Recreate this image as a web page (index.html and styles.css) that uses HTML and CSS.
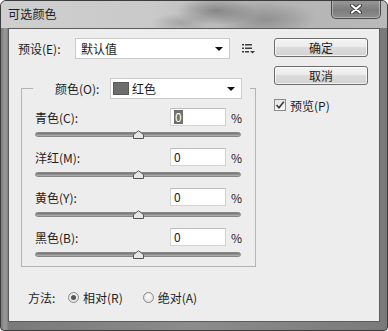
FILE: index.html
```html
<!DOCTYPE html>
<html lang="zh">
<head>
<meta charset="utf-8">
<title>可选颜色</title>
<link rel="stylesheet" href="styles.css">
</head>
<body>
<div class="window">
  <div class="titlebar">
    <span class="title">可选颜色</span>
    <div class="close">
      <svg width="14" height="10" viewBox="0 0 14 10"><path d="M3 1.5 L11 8.5 M11 1.5 L3 8.5" stroke="#3a3a3a" stroke-width="4" stroke-linecap="round"/><path d="M3 1.5 L11 8.5 M11 1.5 L3 8.5" stroke="#ffffff" stroke-width="2.2" stroke-linecap="round"/></svg>
    </div>
  </div>
  <div class="client">
    <div class="main">
      <div class="preset-row">
        <span class="preset-label">预设(E):</span>
        <div class="select preset-select"><span>默认值</span><i class="arrow"></i></div>
        <svg class="list-icon" width="13" height="11" viewBox="0 0 13 11">
          <rect x="0" y="1" width="2" height="1.5" fill="#3c3c3c"/><rect x="3" y="1" width="7" height="1.5" fill="#3c3c3c"/>
          <rect x="0" y="4.5" width="2" height="1.5" fill="#3c3c3c"/><rect x="3" y="4.5" width="7" height="1.5" fill="#3c3c3c"/>
          <rect x="0" y="8" width="2" height="1.5" fill="#3c3c3c"/><rect x="3" y="8" width="4" height="1.5" fill="#3c3c3c"/>
          <path d="M8 8 L13 8 L10.5 10.5 Z" fill="#3c3c3c"/>
        </svg>
      </div>
      <fieldset class="group">
        <legend class="legend">
          <span class="color-label">颜色(O):</span>
          <div class="select color-select"><span class="swatch"></span><span>红色</span><i class="arrow"></i></div>
        </legend>
        <div class="row">
          <div class="row-top"><span class="row-label">青色(C):</span><div class="input"><span class="sel">0</span></div><span class="pct">%</span></div>
          <div class="slider"><div class="track"></div><svg class="thumb" width="11" height="9" viewBox="0 0 11 9"><path d="M0.5 8.5 L0.5 4.5 L5.5 0.8 L10.5 4.5 L10.5 8.5 Z" fill="#e6e6e6" stroke="#555"/></svg></div>
        </div>
        <div class="row">
          <div class="row-top"><span class="row-label">洋红(M):</span><div class="input"><span>0</span></div><span class="pct">%</span></div>
          <div class="slider"><div class="track"></div><svg class="thumb" width="11" height="9" viewBox="0 0 11 9"><path d="M0.5 8.5 L0.5 4.5 L5.5 0.8 L10.5 4.5 L10.5 8.5 Z" fill="#e6e6e6" stroke="#555"/></svg></div>
        </div>
        <div class="row">
          <div class="row-top"><span class="row-label">黄色(Y):</span><div class="input"><span>0</span></div><span class="pct">%</span></div>
          <div class="slider"><div class="track"></div><svg class="thumb" width="11" height="9" viewBox="0 0 11 9"><path d="M0.5 8.5 L0.5 4.5 L5.5 0.8 L10.5 4.5 L10.5 8.5 Z" fill="#e6e6e6" stroke="#555"/></svg></div>
        </div>
        <div class="row">
          <div class="row-top"><span class="row-label">黑色(B):</span><div class="input"><span>0</span></div><span class="pct">%</span></div>
          <div class="slider"><div class="track"></div><svg class="thumb" width="11" height="9" viewBox="0 0 11 9"><path d="M0.5 8.5 L0.5 4.5 L5.5 0.8 L10.5 4.5 L10.5 8.5 Z" fill="#e6e6e6" stroke="#555"/></svg></div>
        </div>
      </fieldset>
      <div class="method-row">
        <span class="method-label">方法:</span>
        <span class="radio checked"></span><span class="radio-text">相对(R)</span>
        <span class="radio"></span><span class="radio-text">绝对(A)</span>
      </div>
    </div>
    <div class="side">
      <div class="button">确定</div>
      <div class="button">取消</div>
      <div class="check-row">
        <span class="checkbox"><svg width="10" height="10" viewBox="0 0 10 10"><path d="M1.5 5 L4 7.8 L8.8 1.8" fill="none" stroke="#3a3a3a" stroke-width="1.6"/></svg></span>
        <span>预览(P)</span>
      </div>
    </div>
  </div>
</div>
</body>
</html>
```
FILE: styles.css
```css
* { box-sizing: border-box; }
html, body { margin: 0; padding: 0; background: #ffffff; }
body {
  font-family: "Noto Sans CJK SC", "Noto Sans", sans-serif;
  font-size: 12px;
  color: #1c1c1c;
}
.window {
  width: 388px;
  height: 331px;
  display: flex;
  flex-direction: column;
  border: 1px solid #3c3c3c;
  border-radius: 6px 6px 4px 4px;
  background: linear-gradient(90deg, #7c7c7c 0, #9a9a9a 4px, #7a7a7a 8px, #8c8c8c 50%, #7a7a7a 100%);
  overflow: hidden;
}
.titlebar {
  height: 27px;
  flex: none;
  display: flex;
  align-items: flex-start;
  padding-left: 7px;
  background:
    radial-gradient(ellipse 40px 14px at 215px 10px, rgba(90,90,90,0.55), rgba(90,90,90,0)),
    radial-gradient(ellipse 50px 18px at 265px 18px, rgba(110,110,110,0.5), rgba(110,110,110,0)),
    radial-gradient(ellipse 30px 10px at 180px 22px, rgba(120,120,120,0.4), rgba(120,120,120,0)),
    linear-gradient(90deg, #cfcfcf 0, #c9c9c9 40%, #b3b3b3 65%, #b9b9b9 100%);
}
.title {
  margin-top: 5px;
  line-height: 16px;
  color: #202020;
  letter-spacing: 0.2px;
}
.close {
  margin-left: auto;
  margin-right: 6px;
  margin-top: -1px;
  width: 50px;
  height: 19px;
  border: 1px solid #4a4a4a;
  border-top: none;
  border-radius: 0 0 5px 5px;
  background: linear-gradient(#9a9a9a, #7c7c7c 55%, #8e8e8e);
  box-shadow: inset 0 0 0 1px rgba(255,255,255,0.35);
  display: flex;
  align-items: center;
  justify-content: center;
}
.client {
  flex: 1;
  margin: 0 7px 8px 7px;
  border: 1px solid #5c5c5c;
  background: #ededed;
  display: flex;
}
.main {
  width: 265px;
  flex: none;
  display: flex;
  flex-direction: column;
}
.preset-row {
  margin-top: 8px;
  padding-left: 9px;
  height: 22px;
  display: flex;
  align-items: center;
}
.preset-label { width: 57px; flex: none; }
.select {
  height: 21px;
  background: #ffffff;
  border: 1px solid #cacaca;
  display: flex;
  align-items: center;
  position: relative;
}
.preset-select { width: 155px; padding-left: 5px; }
.arrow {
  position: absolute;
  right: 6px;
  top: 8px;
  width: 0;
  height: 0;
  border-left: 4px solid transparent;
  border-right: 4px solid transparent;
  border-top: 4px solid #111;
}
.list-icon { margin-left: 12px; }
.group {
  margin: 19px 0 0 12px;
  width: 235px;
  border: 1px solid #b4b4b4;
  padding: 9px 13px 6px 13px;
  min-width: 0;
}
.legend {
  margin-left: -2px;
  padding: 0 8px 0 22px;
  display: flex;
  align-items: center;
  height: 21px;
}
.color-label { width: 55px; flex: none; }
.color-select { width: 132px; padding-left: 2px; }
.swatch {
  width: 16px;
  height: 13px;
  background: #6d6d6d;
  border: 1px solid #5a5a5a;
  margin-right: 3px;
}
.row {
  display: flex;
  flex-direction: column;
  margin-bottom: 8px;
}
.row:last-child { margin-bottom: 0; }
.row-top {
  height: 18px;
  display: flex;
  align-items: center;
}
.row-label { flex: 1; }
.input {
  width: 56px;
  height: 18px;
  background: #ffffff;
  border: 1px solid #d4d4d4;
  border-top-color: #bdbdbd;
  padding-left: 3px;
  display: flex;
  align-items: center;
  line-height: 14px;
}
.sel {
  background: #6f6f6f;
  color: #ffffff;
  padding: 0 1px;
}
.pct { width: 16px; text-align: right; }
.slider {
  margin-top: 2px;
  height: 12px;
  position: relative;
  width: 206px;
}
.track {
  margin-top: 4px;
  height: 5px;
  border-radius: 3px;
  background: linear-gradient(#6e6e6e, #9a9a9a 60%, #b4b4b4);
  border: 1px solid #888;
}
.thumb {
  position: absolute;
  left: 98px;
  top: 2px;
}
.method-row {
  margin-top: 22px;
  padding-left: 19px;
  display: flex;
  align-items: center;
  height: 16px;
}
.method-label { width: 40px; flex: none; }
.radio {
  width: 11px;
  height: 11px;
  border-radius: 50%;
  border: 1px solid #8a8a8a;
  background: radial-gradient(circle at 50% 40%, #ffffff, #d6d6d6);
  margin-right: 4px;
  display: flex;
  align-items: center;
  justify-content: center;
}
.radio.checked::after {
  content: "";
  width: 5px;
  height: 5px;
  border-radius: 50%;
  background: #555;
}
.radio-text { margin-right: 20px; }
.side {
  flex: 1;
  display: flex;
  flex-direction: column;
  padding-left: 0;
}
.button {
  margin-top: 9px;
  width: 94px;
  height: 19px;
  border: 1px solid #6c6c6c;
  border-radius: 3px;
  background: linear-gradient(#f4f4f4 0, #ebebeb 45%, #dcdcdc 50%, #d2d2d2 100%);
  box-shadow: inset 0 0 0 1px rgba(255,255,255,0.7);
  display: flex;
  align-items: center;
  justify-content: center;
  line-height: 14px;
}
.check-row {
  margin-top: 13px;
  display: flex;
  align-items: center;
  height: 14px;
}
.checkbox {
  width: 12px;
  height: 12px;
  border: 1px solid #8a8a8a;
  background: linear-gradient(#e6e6e6, #f8f8f8);
  margin-right: 4px;
  display: flex;
  align-items: center;
  justify-content: center;
}
```
